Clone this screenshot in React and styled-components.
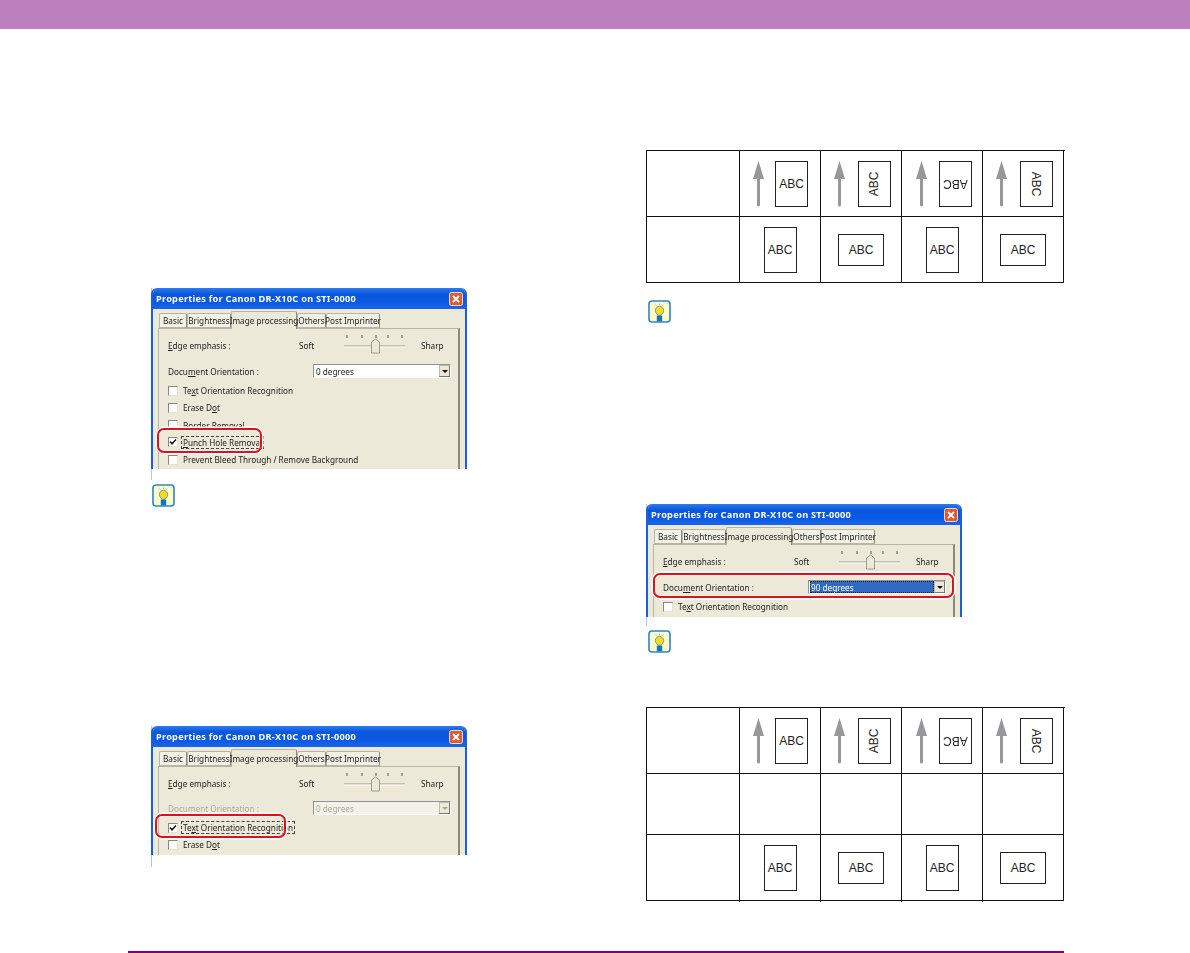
import React from "react";
import styled, { createGlobalStyle } from "styled-components";

const GlobalStyle = createGlobalStyle`
  html, body {
    margin: 0;
    padding: 0;
    background: #fff;
  }
`;

const Page = styled.div`
  height: 953px;
  display: flex;
  flex-direction: column;
  overflow: hidden;
  background: #fff;
  font-family: "Liberation Sans", Arial, sans-serif;
`;

const Header = styled.header`
  height: 29px;
  flex: none;
  background: #bd7fbd;
`;

const Main = styled.main`
  flex: 1;
  display: flex;
  min-height: 0;
`;

const LeftColumn = styled.section`
  width: 495px;
  margin-left: 151px;
  padding-top: 259px;
`;

const RightColumn = styled.section`
  width: 420px;
  padding-top: 121px;
`;

const FooterRule = styled.div`
  height: 2px;
  flex: none;
  width: 936px;
  margin-left: 128px;
  background: #800080;
`;

/* screenshots */
const Shot = styled.div`
  position: relative;
  width: 316px;
  margin-top: ${(p) => p.$top || 0}px;
  padding-bottom: ${(p) => p.$tail}px;
  box-shadow: inset 1px 0 0 #b4c4ee;
`;

const Window = styled.div`
  height: ${(p) => p.$h}px;
  overflow: hidden;
  box-sizing: border-box;
  border-radius: 6px 6px 0 0;
  border-left: 2px solid #1a5fdc;
  border-right: 2px solid #1a5fdc;
  background: #ece9d8;
  font-family: "Noto Sans", Tahoma, sans-serif;
  font-size: 8.2px;
  color: #222;
  filter: blur(0.3px);
`;

const TitleBar = styled.div`
  height: 21px;
  margin: 0 -2px;
  padding: 0 4px 0 5px;
  display: flex;
  align-items: center;
  justify-content: space-between;
  background: linear-gradient(180deg, #2a7cf0 0%, #0a56dc 30%, #0a5ae4 70%, #1c66e8 100%);
  color: #fff;
  font-weight: 700;
  font-size: 9.2px;
  letter-spacing: 0.25px;
`;

const TabStrip = styled.div`
  display: flex;
  align-items: flex-end;
  height: 19px;
  padding-left: 6px;
`;

const Tab = styled.div`
  width: ${(p) => p.$w}px;
  height: ${(p) => (p.$active ? 18 : 15)}px;
  box-sizing: border-box;
  display: flex;
  align-items: center;
  justify-content: center;
  white-space: nowrap;
  background: ${(p) => (p.$active ? "#ece9d8" : "#f3f1e6")};
  border: 1px solid #b8b5a4;
  border-bottom: ${(p) => (p.$active ? "none" : "1px solid #b8b5a4")};
  border-right: 1px solid #8c8a7c;
  border-radius: 2px 2px 0 0;
  position: relative;
  margin-bottom: ${(p) => (p.$active ? "-1px" : 0)};
  z-index: ${(p) => (p.$active ? 1 : 0)};
`;

const Panel = styled.div`
  margin: 0 5px 0 5px;
  height: 300px;
  box-sizing: border-box;
  border: 1px solid #b8b5a4;
  border-right: 2px solid #8c8a7c;
  padding: 6px 0 0 9px;
`;

const EdgeRow = styled.div`
  display: grid;
  grid-template-columns: 131px 45px 77px auto;
  align-items: center;
  height: 20px;
  white-space: nowrap;
`;

const OrientationRow = styled.div`
  display: grid;
  grid-template-columns: 145px 138px;
  align-items: center;
  height: 14px;
  margin-top: ${(p) => p.$top}px;
  color: ${(p) => (p.$disabled ? "#aca899" : "#222")};
`;

const Select = styled.div`
  height: 14px;
  box-sizing: border-box;
  display: flex;
  align-items: center;
  justify-content: space-between;
  background: ${(p) => (p.$disabled ? "#f4f2e8" : "#fff")};
  border: 1px solid #8f9296;
  border-right-color: #fff;
  border-bottom-color: #fff;
  padding-left: 2px;
`;

const SelectText = styled.span`
  flex: 1;
  height: 100%;
  display: flex;
  align-items: center;
  ${(p) =>
    p.$selected &&
    `
    background: #316ac5;
    color: #fff;
    outline: 1px dotted #222;
    outline-offset: -1px;
    margin-left: -1px;
    padding-left: 1px;
  `}
`;

const DropButton = styled.div`
  width: 11px;
  height: 12px;
  flex: none;
  display: flex;
  align-items: center;
  justify-content: center;
  background: #ece9d8;
  border: 1px solid #bdbaa8;
  border-right-color: #77756a;
  border-bottom-color: #77756a;
  box-sizing: border-box;
  &::after {
    content: "";
    border-left: 3px solid transparent;
    border-right: 3px solid transparent;
    border-top: 3px solid ${(p) => (p.$disabled ? "#aca899" : "#111")};
  }
`;

const CheckRow = styled.div`
  display: flex;
  align-items: center;
  gap: 4px;
  height: 17.25px;
  white-space: nowrap;
  margin-top: ${(p) => p.$top || 0}px;
`;

const CheckBox = styled.span`
  width: 8px;
  height: 8px;
  flex: none;
  display: flex;
  background: #fff;
  border: 1px solid #8b8879;
  border-right-color: #e4e2d4;
  border-bottom-color: #e4e2d4;
`;

const CheckLabel = styled.span`
  padding: 0 1px;
  outline: ${(p) => (p.$focus ? "1px dashed #444" : "none")};
  line-height: 11px;
`;

const Mnemonic = styled.span`
  text-decoration: underline;
  text-underline-offset: 1px;
`;

const RedRing = styled.div`
  position: absolute;
  left: ${(p) => p.$x}px;
  top: ${(p) => p.$y}px;
  width: ${(p) => p.$w}px;
  height: ${(p) => p.$h}px;
  box-sizing: border-box;
  border: 2px solid #e2101c;
  border-radius: 7px;
  box-shadow: 0 0 0 1.5px #fff, inset 0 0 0 0.5px #fff;
`;

/* tip icon */
const TipWrap = styled.div`
  width: 23px;
  height: 23px;
  margin-top: ${(p) => p.$top}px;
  margin-left: ${(p) => p.$left}px;
`;

/* tables */
const Table = styled.div`
  display: grid;
  grid-template-columns: 93px 81px 81px 81px 81px;
  grid-auto-rows: auto;
  width: 418px;
  margin-top: ${(p) => p.$top || 0}px;
  border-top: 1px solid #111;
  border-left: 1px solid #111;
`;

const Cell = styled.div`
  position: relative;
  height: ${(p) => p.$h}px;
  box-sizing: border-box;
  border-right: 1px solid #111;
  border-bottom: 1px solid #111;
  display: flex;
  align-items: center;
  justify-content: ${(p) => (p.$pad !== undefined ? "flex-start" : "center")};
  padding-left: ${(p) => p.$pad || 0}px;
  gap: ${(p) => p.$gap || 0}px;
  ${(p) =>
    p.$tick &&
    `
    &::after {
      content: "";
      position: absolute;
      right: -1px;
      bottom: -2px;
      width: 1px;
      height: 2px;
      background: #111;
    }
  `}
`;

const Sheet = styled.div`
  width: ${(p) => (p.$wide ? 46 : 33)}px;
  height: ${(p) => (p.$wide ? 32 : 46)}px;
  flex: none;
  box-sizing: border-box;
  border: 1px solid #222;
  background: #fff;
  display: flex;
  align-items: center;
  justify-content: center;
`;

const SheetText = styled.span`
  display: block;
  font-size: 12px;
  color: #222;
  line-height: 1;
  transform: rotate(${(p) => p.$rot || 0}deg);
`;

const TipIcon = () => (
  <svg width="23" height="23" viewBox="0 0 23 23">
    <rect x="1" y="1" width="21" height="21" rx="3" fill="#fffbc8" stroke="#2b86c9" strokeWidth="1.6" />
    <path d="M7.5 4.5l1 1.2M11.5 3.5v1.6M15.5 4.5l-1 1.2" stroke="#9bb4c4" strokeWidth="0.9" />
    <path
      d="M11.5 6.4a4.2 4.2 0 0 0-4.2 4.2c0 1.9 1.7 3 2.4 4.6h3.6c.7-1.6 2.4-2.7 2.4-4.6a4.2 4.2 0 0 0-4.2-4.2z"
      fill="#ffd91a"
      stroke="#3f8fc4"
      strokeWidth="0.8"
    />
    <rect x="8.8" y="15.6" width="5.4" height="5.8" fill="#1673b8" />
  </svg>
);

const CloseIcon = () => (
  <svg width="14" height="14" viewBox="0 0 14 14">
    <rect x="0.5" y="0.5" width="13" height="13" rx="2" fill="#dc5a34" stroke="#f3d8cc" />
    <path d="M4 4l6 6M10 4l-6 6" stroke="#fff" strokeWidth="1.8" />
  </svg>
);

const TickMark = ({ x }) => <line x1={x} y1="0" x2={x} y2="3" stroke="#555" strokeWidth="1" />;

const Slider = () => (
  <svg width="62" height="20" viewBox="0 0 62 20">
    {[3, 18, 32, 44, 58].map((x) => (
      <TickMark key={x} x={x} />
    ))}
    <line x1="0" y1="11" x2="61" y2="11" stroke="#9a9888" />
    <line x1="0" y1="12" x2="61" y2="12" stroke="#fff" />
    <path d="M27.5 7l4-3 4 3v11h-8z" fill="#ece9d8" stroke="#8c8a7c" strokeWidth="0.8" />
  </svg>
);

const Arrow = () => (
  <svg width="11" height="46" viewBox="0 0 11 46" style={{ flex: "none" }}>
    <path d="M5.5 0L11 18H7v26a1.5 1.5 0 0 1-3 0V18H0z" fill="#98989c" />
  </svg>
);

const CheckMark = () => (
  <svg width="8" height="8" viewBox="0 0 8 8">
    <path d="M1 3.6l2 2.2L7 1.6" fill="none" stroke="#111" strokeWidth="1.5" />
  </svg>
);

const tabs = [
  { label: "Basic", w: 28 },
  { label: "Brightness", w: 44 },
  { label: "Image processing", w: 66, active: true },
  { label: "Others", w: 29 },
  { label: "Post Imprinter", w: 54 },
];

const Check = ({ checked, focus, top, children }) => (
  <CheckRow $top={top}>
    <CheckBox>{checked && <CheckMark />}</CheckBox>
    <CheckLabel $focus={focus}>{children}</CheckLabel>
  </CheckRow>
);

const Dialog = ({ height, children }) => (
  <Window $h={height}>
    <TitleBar>
      <span>Properties for Canon DR-X10C on STI-0000</span>
      <CloseIcon />
    </TitleBar>
    <TabStrip>
      {tabs.map((t) => (
        <Tab key={t.label} $w={t.w} $active={t.active}>
          {t.label}
        </Tab>
      ))}
    </TabStrip>
    <Panel>
      <EdgeRow>
        <span>
          <Mnemonic>E</Mnemonic>dge emphasis :
        </span>
        <span>Soft</span>
        <Slider />
        <span>Sharp</span>
      </EdgeRow>
      {children}
    </Panel>
  </Window>
);

const Orientation = ({ value, disabled, selected, top }) => (
  <OrientationRow $disabled={disabled} $top={top}>
    <span>
      Docu<Mnemonic>m</Mnemonic>ent Orientation :
    </span>
    <Select $disabled={disabled}>
      <SelectText $selected={selected}>{value}</SelectText>
      <DropButton $disabled={disabled} />
    </Select>
  </OrientationRow>
);

const TextOrientation = (
  <>
    Te<Mnemonic>x</Mnemonic>t Orientation Recognition
  </>
);

const EraseDot = (
  <>
    Erase D<Mnemonic>o</Mnemonic>t
  </>
);

const topRow = [
  { pad: 13, gap: 11, rot: 0 },
  { pad: 13, gap: 13, rot: -90 },
  { pad: 14, gap: 12, rot: 180 },
  { pad: 13, gap: 13, rot: 90 },
];

const bottomRow = [{ wide: false }, { wide: true }, { wide: false }, { wide: true }];

const OrientationTable = ({ top, rows, tick }) => (
  <Table $top={top}>
    <Cell $h={rows[0]} />
    {topRow.map((c) => (
      <Cell key={c.rot} $h={rows[0]} $pad={c.pad} $gap={c.gap}>
        <Arrow />
        <Sheet>
          <SheetText $rot={c.rot}>ABC</SheetText>
        </Sheet>
      </Cell>
    ))}
    {rows.length === 3 &&
      [0, 1, 2, 3, 4].map((i) => <Cell key={i} $h={rows[1]} />)}
    <Cell $h={rows[rows.length - 1]} $tick={tick} />
    {bottomRow.map((c, i) => (
      <Cell key={i} $h={rows[rows.length - 1]} $tick={tick && i < 3}>
        <Sheet $wide={c.wide}>
          <SheetText>ABC</SheetText>
        </Sheet>
      </Cell>
    ))}
  </Table>
);

export default function App() {
  return (
    <Page>
      <GlobalStyle />
      <Header />
      <Main>
        <LeftColumn>
          <Shot $tail={11}>
            <Dialog height={181}>
              <Orientation value="0 degrees" top={9} />
              <Check top={4}>{TextOrientation}</Check>
              <Check>{EraseDot}</Check>
              <Check>Border Removal</Check>
              <Check checked focus>
                <Mnemonic>P</Mnemonic>unch Hole Removal
              </Check>
              <Check>Prevent Bleed Through / Remove Background</Check>
            </Dialog>
            <RedRing $x={6} $y={140} $w={105} $h={25} />
          </Shot>
          <TipWrap $top={4} $left={1}>
            <TipIcon />
          </TipWrap>
          <Shot $top={219} $tail={12}>
            <Dialog height={129}>
              <Orientation value="0 degrees" disabled top={8} />
              <Check top={4} checked focus>
                {TextOrientation}
              </Check>
              <Check>{EraseDot}</Check>
            </Dialog>
            <RedRing $x={4} $y={88} $w={131} $h={24} />
          </Shot>
        </LeftColumn>
        <RightColumn>
          <OrientationTable rows={[66, 66]} />
          <TipWrap $top={17} $left={2}>
            <TipIcon />
          </TipWrap>
          <Shot $top={181} $tail={9}>
            <Dialog height={113}>
              <Orientation value="90 degrees" selected top={9} />
              <Check top={4}>{TextOrientation}</Check>
            </Dialog>
            <RedRing $x={7} $y={69} $w={301} $h={25} />
          </Shot>
          <TipWrap $top={4} $left={2}>
            <TipIcon />
          </TipWrap>
          <OrientationTable top={54} rows={[66, 61, 66]} tick />
        </RightColumn>
      </Main>
      <FooterRule />
    </Page>
  );
}
